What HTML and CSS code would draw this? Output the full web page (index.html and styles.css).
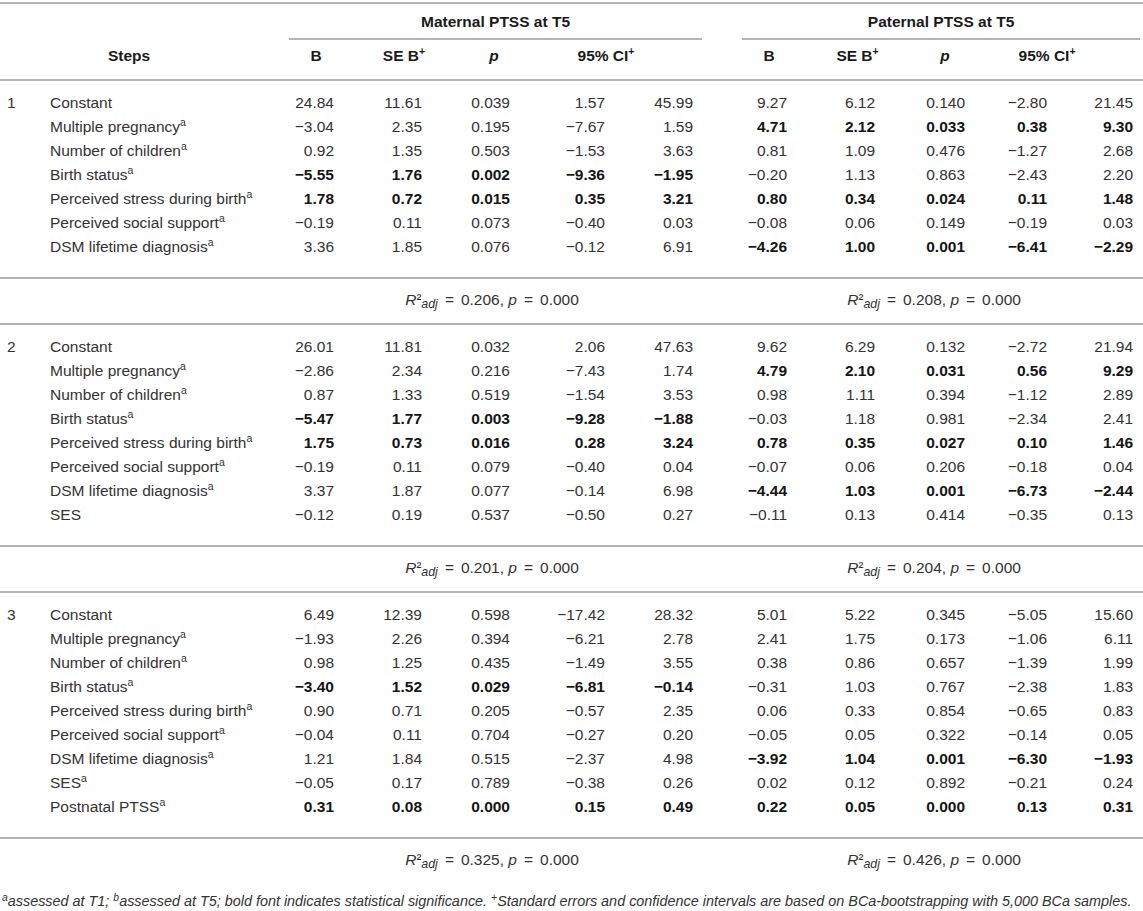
FILE: index.html
```html
<!DOCTYPE html>
<html>
<head>
<meta charset="utf-8">
<link rel="stylesheet" href="styles.css">
</head>
<body>
<table class="tbl">
<colgroup>
<col class="c-step"><col class="c-label">
<col class="c-bm"><col class="c-sem"><col class="c-pm"><col class="c-clm"><col class="c-cum">
<col class="c-gap">
<col class="c-bp"><col class="c-sep"><col class="c-pp"><col class="c-clp"><col class="c-cup">
</colgroup>
<thead>
<tr class="h1">
<th colspan="2"></th>
<th colspan="5" class="grp grp-m"><div class="grp-line">Maternal PTSS at T5</div></th>
<th></th>
<th colspan="5" class="grp grp-p"><div class="grp-line">Paternal PTSS at T5</div></th>
</tr>
<tr class="h2">
<th colspan="2" class="steps">Steps</th>
<th>B</th><th>SE B<sup>+</sup></th><th><i>p</i></th><th colspan="2" class="ci ci-m">95% CI<sup>+</sup></th>
<th></th>
<th>B</th><th>SE B<sup>+</sup></th><th><i>p</i></th><th colspan="2" class="ci ci-p">95% CI<sup>+</sup></th>
</tr>
</thead>
<tbody>
<tr class="first"><td class="step">1</td><td class="lab">Constant</td><td class="n bm">24.84</td><td class="n sem">11.61</td><td class="n pm">0.039</td><td class="n clm">1.57</td><td class="n cum">45.99</td><td></td><td class="n bp">9.27</td><td class="n sep">6.12</td><td class="n pp">0.140</td><td class="n clp">−2.80</td><td class="n cup">21.45</td></tr>
<tr><td></td><td class="lab">Multiple pregnancy<sup>a</sup></td><td class="n bm">−3.04</td><td class="n sem">2.35</td><td class="n pm">0.195</td><td class="n clm">−7.67</td><td class="n cum">1.59</td><td></td><td class="n bp b">4.71</td><td class="n sep b">2.12</td><td class="n pp b">0.033</td><td class="n clp b">0.38</td><td class="n cup b">9.30</td></tr>
<tr><td></td><td class="lab">Number of children<sup>a</sup></td><td class="n bm">0.92</td><td class="n sem">1.35</td><td class="n pm">0.503</td><td class="n clm">−1.53</td><td class="n cum">3.63</td><td></td><td class="n bp">0.81</td><td class="n sep">1.09</td><td class="n pp">0.476</td><td class="n clp">−1.27</td><td class="n cup">2.68</td></tr>
<tr><td></td><td class="lab">Birth status<sup>a</sup></td><td class="n bm b">−5.55</td><td class="n sem b">1.76</td><td class="n pm b">0.002</td><td class="n clm b">−9.36</td><td class="n cum b">−1.95</td><td></td><td class="n bp">−0.20</td><td class="n sep">1.13</td><td class="n pp">0.863</td><td class="n clp">−2.43</td><td class="n cup">2.20</td></tr>
<tr><td></td><td class="lab">Perceived stress during birth<sup>a</sup></td><td class="n bm b">1.78</td><td class="n sem b">0.72</td><td class="n pm b">0.015</td><td class="n clm b">0.35</td><td class="n cum b">3.21</td><td></td><td class="n bp b">0.80</td><td class="n sep b">0.34</td><td class="n pp b">0.024</td><td class="n clp b">0.11</td><td class="n cup b">1.48</td></tr>
<tr><td></td><td class="lab">Perceived social support<sup>a</sup></td><td class="n bm">−0.19</td><td class="n sem">0.11</td><td class="n pm">0.073</td><td class="n clm">−0.40</td><td class="n cum">0.03</td><td></td><td class="n bp">−0.08</td><td class="n sep">0.06</td><td class="n pp">0.149</td><td class="n clp">−0.19</td><td class="n cup">0.03</td></tr>
<tr class="last"><td></td><td class="lab">DSM lifetime diagnosis<sup>a</sup></td><td class="n bm">3.36</td><td class="n sem">1.85</td><td class="n pm">0.076</td><td class="n clm">−0.12</td><td class="n cum">6.91</td><td></td><td class="n bp b">−4.26</td><td class="n sep b">1.00</td><td class="n pp b">0.001</td><td class="n clp b">−6.41</td><td class="n cup b">−2.29</td></tr>
<tr class="r2"><td colspan="2"></td><td colspan="5" class="r2m"><i>R</i><span class="sq">²</span><sub><i>adj</i></sub><span class="eq">=</span>0.206, <i>p</i><span class="eq">=</span>0.000</td><td></td><td colspan="5" class="r2p"><i>R</i><span class="sq">²</span><sub><i>adj</i></sub><span class="eq">=</span>0.208, <i>p</i><span class="eq">=</span>0.000</td></tr>

<tr class="first"><td class="step">2</td><td class="lab">Constant</td><td class="n bm">26.01</td><td class="n sem">11.81</td><td class="n pm">0.032</td><td class="n clm">2.06</td><td class="n cum">47.63</td><td></td><td class="n bp">9.62</td><td class="n sep">6.29</td><td class="n pp">0.132</td><td class="n clp">−2.72</td><td class="n cup">21.94</td></tr>
<tr><td></td><td class="lab">Multiple pregnancy<sup>a</sup></td><td class="n bm">−2.86</td><td class="n sem">2.34</td><td class="n pm">0.216</td><td class="n clm">−7.43</td><td class="n cum">1.74</td><td></td><td class="n bp b">4.79</td><td class="n sep b">2.10</td><td class="n pp b">0.031</td><td class="n clp b">0.56</td><td class="n cup b">9.29</td></tr>
<tr><td></td><td class="lab">Number of children<sup>a</sup></td><td class="n bm">0.87</td><td class="n sem">1.33</td><td class="n pm">0.519</td><td class="n clm">−1.54</td><td class="n cum">3.53</td><td></td><td class="n bp">0.98</td><td class="n sep">1.11</td><td class="n pp">0.394</td><td class="n clp">−1.12</td><td class="n cup">2.89</td></tr>
<tr><td></td><td class="lab">Birth status<sup>a</sup></td><td class="n bm b">−5.47</td><td class="n sem b">1.77</td><td class="n pm b">0.003</td><td class="n clm b">−9.28</td><td class="n cum b">−1.88</td><td></td><td class="n bp">−0.03</td><td class="n sep">1.18</td><td class="n pp">0.981</td><td class="n clp">−2.34</td><td class="n cup">2.41</td></tr>
<tr><td></td><td class="lab">Perceived stress during birth<sup>a</sup></td><td class="n bm b">1.75</td><td class="n sem b">0.73</td><td class="n pm b">0.016</td><td class="n clm b">0.28</td><td class="n cum b">3.24</td><td></td><td class="n bp b">0.78</td><td class="n sep b">0.35</td><td class="n pp b">0.027</td><td class="n clp b">0.10</td><td class="n cup b">1.46</td></tr>
<tr><td></td><td class="lab">Perceived social support<sup>a</sup></td><td class="n bm">−0.19</td><td class="n sem">0.11</td><td class="n pm">0.079</td><td class="n clm">−0.40</td><td class="n cum">0.04</td><td></td><td class="n bp">−0.07</td><td class="n sep">0.06</td><td class="n pp">0.206</td><td class="n clp">−0.18</td><td class="n cup">0.04</td></tr>
<tr><td></td><td class="lab">DSM lifetime diagnosis<sup>a</sup></td><td class="n bm">3.37</td><td class="n sem">1.87</td><td class="n pm">0.077</td><td class="n clm">−0.14</td><td class="n cum">6.98</td><td></td><td class="n bp b">−4.44</td><td class="n sep b">1.03</td><td class="n pp b">0.001</td><td class="n clp b">−6.73</td><td class="n cup b">−2.44</td></tr>
<tr class="last"><td></td><td class="lab">SES</td><td class="n bm">−0.12</td><td class="n sem">0.19</td><td class="n pm">0.537</td><td class="n clm">−0.50</td><td class="n cum">0.27</td><td></td><td class="n bp">−0.11</td><td class="n sep">0.13</td><td class="n pp">0.414</td><td class="n clp">−0.35</td><td class="n cup">0.13</td></tr>
<tr class="r2"><td colspan="2"></td><td colspan="5" class="r2m"><i>R</i><span class="sq">²</span><sub><i>adj</i></sub><span class="eq">=</span>0.201, <i>p</i><span class="eq">=</span>0.000</td><td></td><td colspan="5" class="r2p"><i>R</i><span class="sq">²</span><sub><i>adj</i></sub><span class="eq">=</span>0.204, <i>p</i><span class="eq">=</span>0.000</td></tr>

<tr class="first"><td class="step">3</td><td class="lab">Constant</td><td class="n bm">6.49</td><td class="n sem">12.39</td><td class="n pm">0.598</td><td class="n clm">−17.42</td><td class="n cum">28.32</td><td></td><td class="n bp">5.01</td><td class="n sep">5.22</td><td class="n pp">0.345</td><td class="n clp">−5.05</td><td class="n cup">15.60</td></tr>
<tr><td></td><td class="lab">Multiple pregnancy<sup>a</sup></td><td class="n bm">−1.93</td><td class="n sem">2.26</td><td class="n pm">0.394</td><td class="n clm">−6.21</td><td class="n cum">2.78</td><td></td><td class="n bp">2.41</td><td class="n sep">1.75</td><td class="n pp">0.173</td><td class="n clp">−1.06</td><td class="n cup">6.11</td></tr>
<tr><td></td><td class="lab">Number of children<sup>a</sup></td><td class="n bm">0.98</td><td class="n sem">1.25</td><td class="n pm">0.435</td><td class="n clm">−1.49</td><td class="n cum">3.55</td><td></td><td class="n bp">0.38</td><td class="n sep">0.86</td><td class="n pp">0.657</td><td class="n clp">−1.39</td><td class="n cup">1.99</td></tr>
<tr><td></td><td class="lab">Birth status<sup>a</sup></td><td class="n bm b">−3.40</td><td class="n sem b">1.52</td><td class="n pm b">0.029</td><td class="n clm b">−6.81</td><td class="n cum b">−0.14</td><td></td><td class="n bp">−0.31</td><td class="n sep">1.03</td><td class="n pp">0.767</td><td class="n clp">−2.38</td><td class="n cup">1.83</td></tr>
<tr><td></td><td class="lab">Perceived stress during birth<sup>a</sup></td><td class="n bm">0.90</td><td class="n sem">0.71</td><td class="n pm">0.205</td><td class="n clm">−0.57</td><td class="n cum">2.35</td><td></td><td class="n bp">0.06</td><td class="n sep">0.33</td><td class="n pp">0.854</td><td class="n clp">−0.65</td><td class="n cup">0.83</td></tr>
<tr><td></td><td class="lab">Perceived social support<sup>a</sup></td><td class="n bm">−0.04</td><td class="n sem">0.11</td><td class="n pm">0.704</td><td class="n clm">−0.27</td><td class="n cum">0.20</td><td></td><td class="n bp">−0.05</td><td class="n sep">0.05</td><td class="n pp">0.322</td><td class="n clp">−0.14</td><td class="n cup">0.05</td></tr>
<tr><td></td><td class="lab">DSM lifetime diagnosis<sup>a</sup></td><td class="n bm">1.21</td><td class="n sem">1.84</td><td class="n pm">0.515</td><td class="n clm">−2.37</td><td class="n cum">4.98</td><td></td><td class="n bp b">−3.92</td><td class="n sep b">1.04</td><td class="n pp b">0.001</td><td class="n clp b">−6.30</td><td class="n cup b">−1.93</td></tr>
<tr><td></td><td class="lab">SES<sup>a</sup></td><td class="n bm">−0.05</td><td class="n sem">0.17</td><td class="n pm">0.789</td><td class="n clm">−0.38</td><td class="n cum">0.26</td><td></td><td class="n bp">0.02</td><td class="n sep">0.12</td><td class="n pp">0.892</td><td class="n clp">−0.21</td><td class="n cup">0.24</td></tr>
<tr class="last"><td></td><td class="lab">Postnatal PTSS<sup>a</sup></td><td class="n bm b">0.31</td><td class="n sem b">0.08</td><td class="n pm b">0.000</td><td class="n clm b">0.15</td><td class="n cum b">0.49</td><td></td><td class="n bp b">0.22</td><td class="n sep b">0.05</td><td class="n pp b">0.000</td><td class="n clp b">0.13</td><td class="n cup b">0.31</td></tr>
<tr class="r2"><td colspan="2"></td><td colspan="5" class="r2m"><i>R</i><span class="sq">²</span><sub><i>adj</i></sub><span class="eq">=</span>0.325, <i>p</i><span class="eq">=</span>0.000</td><td></td><td colspan="5" class="r2p"><i>R</i><span class="sq">²</span><sub><i>adj</i></sub><span class="eq">=</span>0.426, <i>p</i><span class="eq">=</span>0.000</td></tr>
</tbody>
</table>
<p class="note"><sup>a</sup>assessed at T1; <sup>b</sup>assessed at T5; bold font indicates statistical significance. <sup>+</sup>Standard errors and confidence intervals are based on BCa-bootstrapping with 5,000 BCa samples.</p>
</body>
</html>
```

FILE: styles.css
```css
html, body {
  margin: 0;
  padding: 0;
  background: #ffffff;
}

body {
  font-family: "Liberation Sans", Arial, sans-serif;
  font-size: 15.5px;
  color: #333333;
}

.tbl {
  border-collapse: collapse;
  table-layout: fixed;
  width: 1143px;
  margin-top: 2px;
  border-top: 2px solid #b4b4b4;
}

.c-step { width: 40px; }
.c-label { width: 232px; }
.c-bm { width: 88px; }
.c-sem { width: 88px; }
.c-pm { width: 92px; }
.c-clm { width: 91px; }
.c-cum { width: 88px; }
.c-gap { width: 6px; }
.c-bp { width: 88px; }
.c-sep { width: 89px; }
.c-pp { width: 86px; }
.c-clp { width: 84px; }
.c-cup { width: 71px; }

.tbl th, .tbl td {
  padding: 0;
  line-height: 24px;
  white-space: nowrap;
  vertical-align: middle;
}

.tbl th {
  font-weight: bold;
  text-align: center;
  color: #1a1a1a;
}

.tbl .h1 th {
  padding-top: 6px;
}

.tbl th.grp-m {
  padding-left: 17px;
  padding-right: 17px;
}

.tbl th.grp-p {
  padding-left: 17px;
  padding-right: 3px;
}

.grp-line {
  padding-bottom: 4px;
  border-bottom: 2px solid #b4b4b4;
}

.tbl .h2 th {
  padding-top: 4px;
  padding-bottom: 11px;
  border-bottom: 2px solid #b4b4b4;
}

.tbl .h2 th.steps {
  padding-right: 14px;
}

.tbl .h2 th.ci-m {
  padding-right: 47px;
}

.tbl .h2 th.ci-p {
  padding-right: 37px;
}

.tbl sup {
  font-size: 0.68em;
  line-height: 0;
  vertical-align: 0.55em;
}

.tbl td.step {
  padding-left: 7px;
}

.tbl td.lab {
  padding-left: 10px;
}

.tbl td.n {
  text-align: right;
}

.tbl td.b {
  font-weight: bold;
  color: #151515;
}

.tbl td.bm { padding-right: 26px; }
.tbl td.sem { padding-right: 26px; }
.tbl td.pm { padding-right: 30px; }
.tbl td.clm { padding-right: 26px; }
.tbl td.cum { padding-right: 26px; }
.tbl td.bp { padding-right: 26px; }
.tbl td.sep { padding-right: 27px; }
.tbl td.pp { padding-right: 23px; }
.tbl td.clp { padding-right: 25px; }
.tbl td.cup { padding-right: 10px; }

.tbl tr.first td {
  padding-top: 10px;
  border-top: 2px solid #b4b4b4;
}

.tbl tr.last td {
  padding-bottom: 18px;
}

.tbl tr.r2 td {
  border-top: 2px solid #b4b4b4;
  padding-top: 9px;
  padding-bottom: 11px;
  text-align: center;
}

.tbl tr.r2 td.r2m {
  padding-right: 7px;
}

.sq {
  font-size: 0.95em;
  vertical-align: 0.1em;
  line-height: 0;
}

.eq {
  margin: 0 7px;
}

.tbl sub {
  font-size: 0.8em;
  line-height: 0;
  vertical-align: -0.25em;
}

.note {
  margin: 0;
  padding: 9px 0 0 2px;
  font-size: 14.4px;
  line-height: 18px;
  font-style: italic;
  white-space: nowrap;
}

.note sup {
  font-size: 0.72em;
  line-height: 0;
  vertical-align: 0.45em;
}
```
